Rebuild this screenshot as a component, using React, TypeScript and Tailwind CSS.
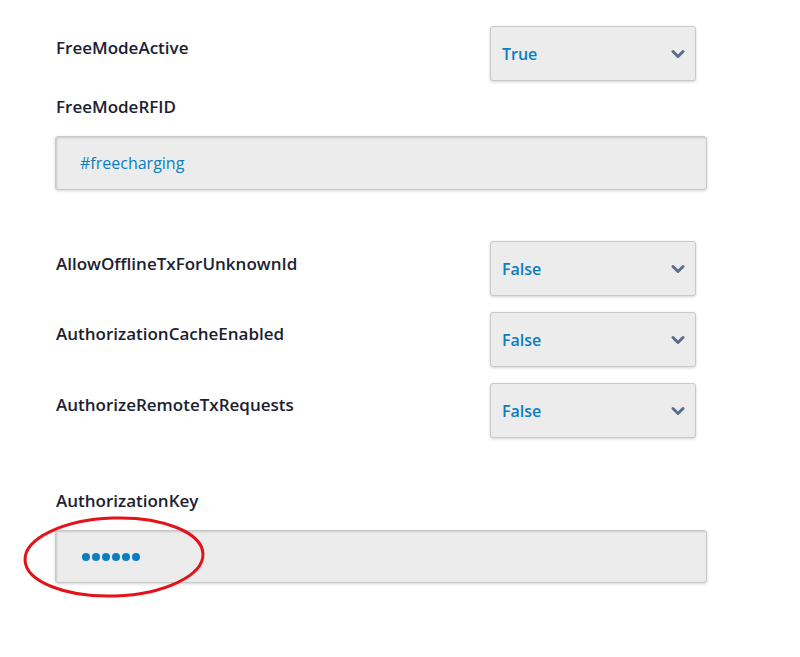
import React from "react";

const font = { fontFamily: '"Open Sans", "Noto Sans", sans-serif' };

function Chevron() {
  return (
    <svg width="14" height="10" viewBox="0 0 14 10" className="shrink-0">
      <polyline
        points="2,2.5 7,7.5 12,2.5"
        fill="none"
        stroke="#5a6d89"
        strokeWidth="3"
        strokeLinecap="round"
        strokeLinejoin="round"
      />
    </svg>
  );
}

function SelectRow({ label, value, labelTop }: { label: string; value: string; labelTop: string }) {
  return (
    <div className="flex items-start justify-between">
      <span className={`${labelTop} pl-px text-[17px] font-semibold leading-6 text-[#1b2130]`}>{label}</span>
      <div className="mr-[11px] flex h-[55px] w-[206px] items-center justify-between rounded-[3px] border border-[#c9c9c9] bg-[#ececec] pl-[11px] pr-[10px] shadow-[0_1px_3px_rgba(0,0,0,0.18)]">
        <span className="text-base font-semibold text-[#0b7dc1]">{value}</span>
        <Chevron />
      </div>
    </div>
  );
}

export default function App() {
  return (
    <div className="relative h-[657px] w-[800px] overflow-hidden bg-white" style={font}>
      <div className="ml-[55px] flex w-[652px] flex-col pt-[26px]">
        <SelectRow label="FreeModeActive" value="True" labelTop="mt-[10px]" />
        <span className="mt-[14px] pl-px text-[17px] font-semibold leading-6 text-[#1b2130]">FreeModeRFID</span>
        <div className="mt-[17px] flex h-[54px] w-[652px] items-center rounded-[3px] border border-[#c9c9c9] bg-[#ececec] pl-[24px] shadow-[inset_1px_1px_2px_rgba(0,0,0,0.15),0_1px_3px_rgba(0,0,0,0.18)]">
          <span className="text-base text-[#0b7dc1]">#freecharging</span>
        </div>
        <div className="mt-[51px] flex flex-col gap-[16px]">
          <SelectRow label="AllowOfflineTxForUnknownId" value="False" labelTop="mt-[11px]" />
          <SelectRow label="AuthorizationCacheEnabled" value="False" labelTop="mt-[10px]" />
          <SelectRow label="AuthorizeRemoteTxRequests" value="False" labelTop="mt-[10px]" />
        </div>
        <span className="mt-[51px] pl-px text-[17px] font-semibold leading-6 text-[#1b2130]">AuthorizationKey</span>
        <div className="mt-[17px] flex h-[53px] w-[652px] items-center gap-[2px] rounded-[3px] border border-[#c9c9c9] bg-[#ececec] pl-[26px] shadow-[inset_1px_1px_2px_rgba(0,0,0,0.15),0_1px_3px_rgba(0,0,0,0.18)]">
          {[0, 1, 2, 3, 4, 5].map((i) => (
            <span key={i} className="h-[8px] w-[8px] rounded-full bg-[#0b7dc1]" />
          ))}
        </div>
      </div>
      <svg className="pointer-events-none absolute left-0 top-0" width="800" height="657">
        <ellipse cx="114" cy="557" rx="89" ry="39" fill="none" stroke="#e3131b" strokeWidth="3" transform="rotate(-2 114 557)" />
      </svg>
    </div>
  );
}
